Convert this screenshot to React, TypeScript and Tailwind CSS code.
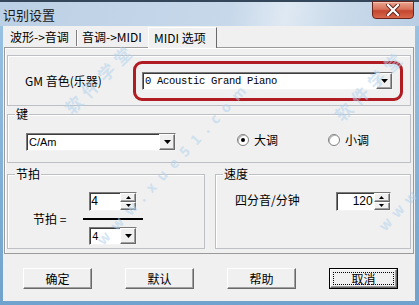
import React from 'react';

const cjk = "font-['Noto_Sans_CJK_SC',sans-serif]";
const sunken =
  'bg-white border border-t-[#7a7a7a] border-l-[#7a7a7a] border-b-[#f4f4f4] border-r-[#f4f4f4] shadow-[inset_1px_1px_0_#3c3c3c]';
const raised =
  'bg-[#f0f0f0] border border-t-white border-l-white border-b-[#696969] border-r-[#696969] shadow-[inset_-1px_-1px_0_#a0a0a0]';

function DownArrow({ w = 7, h = 4 }: { w?: number; h?: number }) {
  return (
    <svg width={w} height={h} viewBox={`0 0 ${w} ${h}`}>
      <polygon points={`0,0 ${w},0 ${w / 2},${h}`} fill="#000" />
    </svg>
  );
}

function UpArrow({ w = 5, h = 3 }: { w?: number; h?: number }) {
  return (
    <svg width={w} height={h} viewBox={`0 0 ${w} ${h}`}>
      <polygon points={`0,${h} ${w},${h} ${w / 2},0`} fill="#000" />
    </svg>
  );
}

function Combo({ text, width, mono }: { text: string; width: string; mono?: boolean }) {
  return (
    <div className={`flex h-[18px] ${width} ${sunken}`}>
      <span
        className={`flex-1 pl-[2px] pt-[1px] text-black ${
          mono
            ? "font-['Liberation_Mono',monospace] text-[10.5px] leading-[14px] tracking-[-0.3px]"
            : "font-['Liberation_Sans',sans-serif] text-[11px] leading-[14px]"
        }`}
      >
        {text}
      </span>
      <div className={`w-[16px] flex items-center justify-center ${raised}`}>
        <DownArrow />
      </div>
    </div>
  );
}

function Spinner({ text, width, right }: { text: string; width: string; right?: boolean }) {
  return (
    <div className={`flex h-[19px] ${width} ${sunken}`}>
      <span
        className={`flex-1 pt-[1px] font-['Liberation_Sans',sans-serif] text-[12px] leading-[15px] text-black ${
          right ? 'text-right pr-[1px]' : 'pl-[1px]'
        }`}
      >
        {text}
      </span>
      <div className="w-[16px] flex flex-col">
        <div className={`flex-1 flex items-center justify-center ${raised}`}>
          <UpArrow />
        </div>
        <div className={`flex-1 flex items-center justify-center ${raised}`}>
          <DownArrow w={5} h={3} />
        </div>
      </div>
    </div>
  );
}

function Radio({ label, checked }: { label: string; checked?: boolean }) {
  return (
    <div className="flex items-center">
      <div className="w-[12px] h-[12px] rounded-full border border-[#7f8080] bg-white shadow-[inset_1px_1px_0_#b8b8b8] flex items-center justify-center">
        {checked && <div className="w-[4px] h-[4px] rounded-full bg-black" />}
      </div>
      <span className={`ml-[5px] text-[12px] leading-[14px] ${cjk}`}>{label}</span>
    </div>
  );
}

function Group({ label, className, children }: { label?: string; className: string; children: React.ReactNode }) {
  return (
    <div className={`relative border border-[#bcc0c4] shadow-[inset_1px_1px_0_#fff] ${className}`}>
      {label && (
        <span className={`absolute left-[7px] top-[-9px] px-[1px] bg-[#f0f0f0] text-[12px] leading-[16px] ${cjk}`}>
          {label}
        </span>
      )}
      {children}
    </div>
  );
}

function DlgButton({ label, focused }: { label: string; focused?: boolean }) {
  if (focused) {
    return (
      <div className="w-[69px] h-[21px] border border-black">
        <div className={`w-full h-full flex items-center justify-center p-[2px] ${raised}`}>
          <div className="w-full h-full border border-dotted border-black flex items-center justify-center">
            <span className={`text-[12px] leading-[14px] ${cjk}`}>{label}</span>
          </div>
        </div>
      </div>
    );
  }
  return (
    <div className={`w-[69px] h-[21px] flex items-center justify-center ${raised}`}>
      <span className={`text-[12px] leading-[14px] ${cjk}`}>{label}</span>
    </div>
  );
}

export default function App() {
  return (
    <div className="w-[419px] h-[305px] relative overflow-hidden flex flex-col bg-[linear-gradient(180deg,#9cc4e4,#6fa2cc)] text-black">
      {/* title bar */}
      <div className="h-[26px] shrink-0 flex items-start shadow-[inset_0_2px_0_#34475a] bg-[linear-gradient(100deg,#bcd0e5_0%,#c7d8ea_55%,#dfe9f3_68%,#cbdbeb_80%,#b9cee4_100%)]">
        <span className={`ml-[3px] mt-[7px] text-[13px] leading-[16px] text-[#1a1a1a] ${cjk}`}>识别设置</span>
        <div className="ml-auto mr-[5px] mt-[1px] w-[42px] h-[18px] rounded-b-[4px] border border-[#6b2418] bg-[linear-gradient(180deg,#eaa48e_0%,#d8735a_45%,#c4452e_55%,#d8684c_100%)] flex items-center justify-center shadow-[inset_0_1px_0_#f4c4b4]">
          <svg width="14" height="12" viewBox="0 0 14 12">
            <path d="M2 1 L12 11 M12 1 L2 11" stroke="#5a2018" strokeWidth="4" strokeLinecap="square" />
            <path d="M2 1 L12 11 M12 1 L2 11" stroke="#fff" strokeWidth="2.2" strokeLinecap="square" />
          </svg>
        </div>
      </div>

      {/* body */}
      <div className="flex-1 ml-[3px] mr-[4px] mb-[4px] bg-[#f0f0f0] flex flex-col">
        {/* tabs */}
        <div className={`mt-[1px] pl-[4px] h-[20px] flex text-[12px] leading-[14px] ${cjk}`}>
          <div className="w-[71px] flex items-center pl-[3px] relative">
            <span>波形-&gt;音调</span>
            <div className="absolute right-0 top-[3px] w-[2px] h-[16px] border-l border-[#808080] border-r border-r-white" />
          </div>
          <div className="w-[70px] flex items-center pl-[4px]">
            <span>音调-&gt;MIDI</span>
          </div>
          <div className="w-[69px] flex items-center pl-[5px] border-t border-t-white border-l border-l-white border-r border-r-[#696969] relative z-10 -mb-px bg-[#f0f0f0]">
            <span>MIDI 选项</span>
          </div>
        </div>

        {/* panel */}
        <div className="ml-[1px] w-[410px] h-[207px] border border-[#9a9a9a] shadow-[inset_1px_1px_0_#fff] px-[2px] pt-[7px] flex flex-col">
          <Group className="h-[51px] flex items-center">
            <span className={`w-[125px] pl-[17px] text-[12px] leading-[14px] ${cjk}`}>GM 音色(乐器)</span>
            <div className="w-[270px] h-[40px] rounded-[9px] border-[3px] border-[#b01c22] flex items-center pl-[6px]">
              <Combo text="0 Acoustic Grand Piano" width="w-[251px]" mono />
            </div>
          </Group>

          <Group label="键" className="mt-[8px] h-[49px] flex items-center pt-[6px]">
            <div className="ml-[18px]">
              <Combo text="C/Am" width="w-[150px]" />
            </div>
            <div className="ml-[61px] -mt-[3px]">
              <Radio label="大调" checked />
            </div>
            <div className="ml-[50px] -mt-[3px]">
              <Radio label="小调" />
            </div>
          </Group>

          <div className="mt-[11px] h-[75px] flex">
            <Group label="节拍" className="w-[198px] flex items-start pt-[17px] pl-[25px]">
              <span className={`mt-[20px] text-[12px] leading-[14px] ${cjk} whitespace-pre`}>节拍 =</span>
              <div className="ml-[17px] w-[60px] flex flex-col items-center">
                <Spinner text="4" width="w-[48px]" />
                <div className="mt-[7px] w-[60px] h-[2px] bg-black" />
                <div className="mt-[7px]">
                  <Combo text="4" width="w-[48px]" />
                </div>
              </div>
            </Group>
            <Group label="速度" className="ml-[10px] flex-1 flex items-start pt-[17px] pl-[19px]">
              <span className={`mt-[1px] text-[12px] leading-[14px] ${cjk}`}>四分音/分钟</span>
              <div className="ml-[36px]">
                <Spinner text="120" width="w-[55px]" right />
              </div>
            </Group>
          </div>
        </div>

        {/* buttons */}
        <div className="mt-[14px] pl-[20px] flex gap-[33px]">
          <DlgButton label="确定" />
          <DlgButton label="默认" />
          <DlgButton label="帮助" />
          <DlgButton label="取消" focused />
        </div>
      </div>

      {/* watermark */}
      <div className="pointer-events-none absolute inset-0 font-['Noto_Sans_CJK_SC',sans-serif] font-bold text-[#b4d3ee] opacity-55">
        <span className="absolute left-[54px] top-[68px] -rotate-45 text-[17px] leading-[20px] tracking-[6px]">软件学堂</span>
        <span className="absolute left-[324px] top-[75px] -rotate-45 text-[17px] leading-[20px] tracking-[6px]">软件学堂</span>
        <span className="absolute left-[64px] top-[152px] rotate-[-47deg] text-[14px] leading-[20px] tracking-[8px]">www.xue51.com</span>
        <span className="absolute left-[372px] top-[198px] rotate-[-47deg] text-[14px] leading-[20px] tracking-[6px]">www</span>
      </div>
    </div>
  );
}
